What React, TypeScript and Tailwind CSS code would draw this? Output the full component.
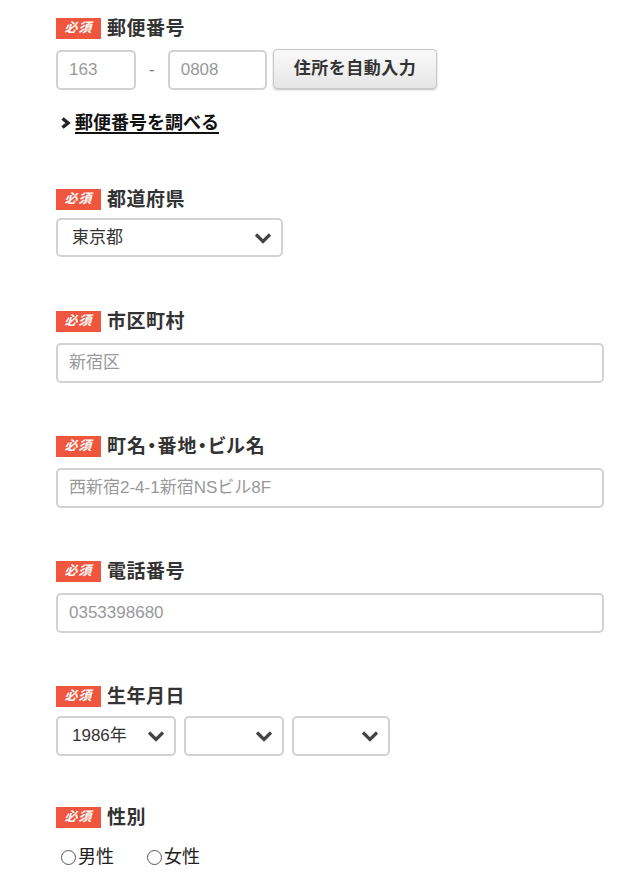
import React from "react";

const font = {
  fontFamily: '"Liberation Sans", "Noto Sans CJK JP", "Noto Sans", sans-serif',
};

const Chevron = () => (
  <svg width="18" height="12" viewBox="0 0 18 12" className="shrink-0">
    <path d="M2 2.5l7 7 7-7" fill="none" stroke="#444" strokeWidth="3.2" />
  </svg>
);

const Label = ({ text, palt = false }: { text: string; palt?: boolean }) => (
  <div className="flex items-center h-[22px] mb-[11px]">
    <span className="flex items-center justify-center w-[45px] h-[21px] bg-[#f0553d] text-white text-[13px] font-bold italic tracking-[1px]">
      必須
    </span>
    <span
      className={`ml-[6px] text-[19px] font-bold text-[#333] leading-none ${
        palt ? "[font-feature-settings:'palt'] tracking-[1px]" : "tracking-[0.5px]"
      }`}
    >
      {text}
    </span>
  </div>
);

const TextField = ({ value, className = "" }: { value: string; className?: string }) => (
  <div
    className={`flex items-center h-10 px-[11px] border-2 border-[#d2d2d2] rounded-[5px] bg-white text-[17px] text-[#999] ${className}`}
  >
    {value}
  </div>
);

const Select = ({ value, className = "" }: { value: string; className?: string }) => (
  <div
    className={`flex items-center justify-between h-10 pl-[14px] pr-[9px] border-2 border-[#d2d2d2] rounded-[5px] bg-white text-[17px] text-[#333] ${className}`}
  >
    <span>{value}</span>
    <Chevron />
  </div>
);

const Radio = ({ text }: { text: string }) => (
  <label className="flex items-center text-[18px] text-[#222]">
    <span className="w-[15px] h-[15px] rounded-full border border-[#555] mr-[2px]" />
    {text}
  </label>
);

export default function App() {
  return (
    <div className="w-[642px] min-h-[886px] bg-white pl-[56px] pr-[38px] pt-[17px]" style={font}>
      {/* 郵便番号 */}
      <section className="mb-[54px]">
        <Label text="郵便番号" />
        <div className="flex items-center">
          <TextField value="163" className="w-[80px]" />
          <span className="mx-[13px] text-[17px] text-[#777]">-</span>
          <TextField value="0808" className="w-[99px]" />
          <button className="ml-[6px] h-10 px-[20px] -mt-[3px] border border-[#c8c8c8] rounded-[4px] bg-gradient-to-b from-[#fafafa] to-[#e6e6e6] shadow-[0_1px_2px_rgba(0,0,0,0.25)] text-[17px] font-bold text-[#333] tracking-[0.5px]">
            住所を自動入力
          </button>
        </div>
        <a className="flex items-center mt-[22px] h-[22px] text-[18px] font-bold text-[#111]">
          <svg width="12" height="12" viewBox="0 0 12 12" className="mr-[3px] ml-[4px]">
            <path d="M2.5 1.5l5.5 4.5-5.5 4.5" fill="none" stroke="#222" strokeWidth="3.4" />
          </svg>
          <span className="underline underline-offset-[3px] decoration-2">郵便番号を調べる</span>
        </a>
      </section>

      <section className="mb-[53px]">
        <Label text="都道府県" />
        <Select value="東京都" className="w-[227px] -mt-[3px] h-[39px]" />
      </section>

      <section className="mb-[52px]">
        <Label text="市区町村" />
        <TextField value="新宿区" />
      </section>

      <section className="mb-[52px]">
        <Label text="町名・番地・ビル名" palt />
        <TextField value="西新宿2-4-1新宿NSビル8F" />
      </section>

      <section className="mb-[52px]">
        <Label text="電話番号" />
        <TextField value="0353398680" />
      </section>

      <section className="mb-[50px]">
        <Label text="生年月日" />
        <div className="flex gap-2 -mt-[2px]">
          <Select value="1986年" className="w-[120px]" />
          <Select value="" className="w-[100px]" />
          <Select value="" className="w-[98px]" />
        </div>
      </section>

      <section>
        <Label text="性別" />
        <div className="flex gap-[33px] pl-[5px] mt-[16px]">
          <Radio text="男性" />
          <Radio text="女性" />
        </div>
      </section>
    </div>
  );
}
